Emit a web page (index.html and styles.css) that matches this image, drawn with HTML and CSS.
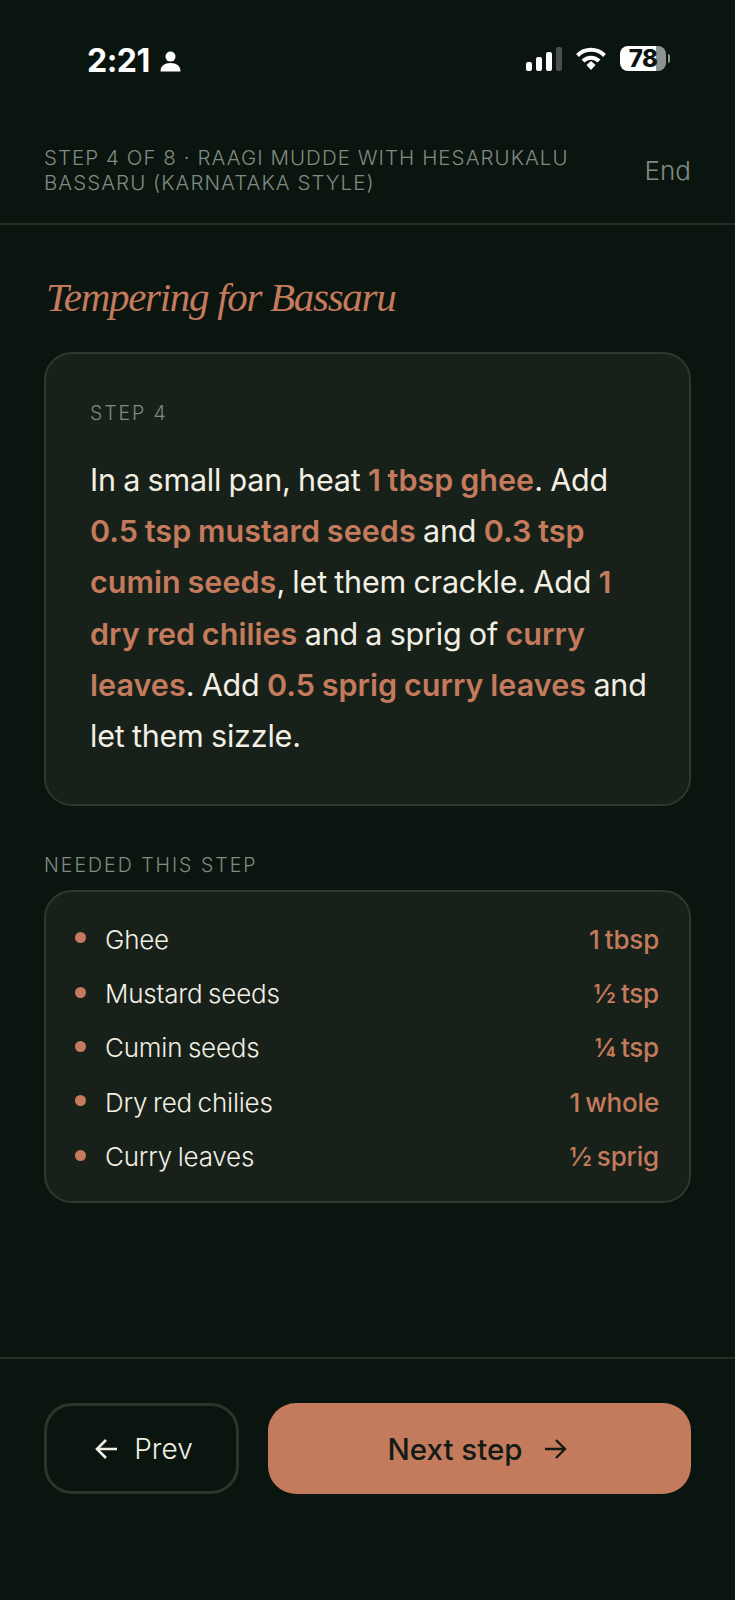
FILE: index.html
```html
<!DOCTYPE html>
<html lang="en">
<head>
<meta charset="utf-8">
<title>Tempering for Bassaru</title>
<link rel="stylesheet" href="styles.css">
</head>
<body>
<div class="page">
  <div class="status">
    <div class="status-left">
      <span class="time">2:21</span>
      <svg class="person" width="21" height="21" viewBox="0 0 21 21"><circle cx="10.500" cy="5.600" r="5" fill="#fff"/><path d="M0.500 20.500c0-5.800 4-8.600 10-8.600s10 2.800 10 8.600z" fill="#fff"/></svg>
    </div>
    <div class="status-right">
      <svg width="36" height="24" viewBox="0 0 36 24"><rect x="0" y="15" width="6" height="9" rx="2" fill="#fff"/><rect x="10" y="10" width="6" height="14" rx="2" fill="#fff"/><rect x="20" y="5" width="6" height="19" rx="2" fill="#fff"/><rect x="30" y="0" width="6" height="24" rx="2" fill="#4a4f4c"/></svg>
      <svg width="32" height="24" viewBox="0 0 32 24"><path d="M2.500 8.500a19 19 0 0 1 27 0" fill="none" stroke="#fff" stroke-width="4"/><path d="M8 14a11.500 11.500 0 0 1 16 0" fill="none" stroke="#fff" stroke-width="4"/><path d="M11.500 18l4.500-4 4.500 4-4.500 5z" fill="#fff"/></svg>
      <div class="battery"><span class="battery-num">78</span><span class="battery-tip"></span></div>
    </div>
  </div>
  <header class="top">
    <div class="crumb">STEP 4 OF 8 · RAAGI MUDDE WITH HESARUKALU BASSARU (KARNATAKA STYLE)</div>
    <div class="end">End</div>
  </header>
  <main class="main">
    <h1 class="title">Tempering for Bassaru</h1>
    <section class="card step">
      <div class="step-label">STEP 4</div>
      <p class="step-text">In a small pan, heat <b>1 tbsp ghee</b>. Add <b>0.5 tsp mustard seeds</b> and <b>0.3 tsp cumin seeds</b>, let them crackle. Add <b>1 dry red chilies</b> and a sprig of <b>curry leaves</b>. Add <b>0.5 sprig curry leaves</b> and let them sizzle.</p>
    </section>
    <div class="needed">NEEDED THIS STEP</div>
    <ul class="card list">
      <li class="row"><span class="dot"></span><span class="name">Ghee</span><span class="qty">1 tbsp</span></li>
      <li class="row"><span class="dot"></span><span class="name">Mustard seeds</span><span class="qty">½ tsp</span></li>
      <li class="row"><span class="dot"></span><span class="name">Cumin seeds</span><span class="qty">¼ tsp</span></li>
      <li class="row"><span class="dot"></span><span class="name">Dry red chilies</span><span class="qty">1 whole</span></li>
      <li class="row"><span class="dot"></span><span class="name">Curry leaves</span><span class="qty">½ sprig</span></li>
    </ul>
  </main>
  <footer class="foot">
    <div class="btn prev">
      <svg width="26" height="26" viewBox="0 0 26 26"><path d="M23 13H3M12 4l-9 9 9 9" fill="none" stroke="#f2efe4" stroke-width="2.600"/></svg>
      <span>Prev</span>
    </div>
    <div class="btn next">
      <span>Next step</span>
      <svg width="26" height="26" viewBox="0 0 26 26"><path d="M3 13h20M14 4l9 9-9 9" fill="none" stroke="#141a14" stroke-width="2.400"/></svg>
    </div>
  </footer>
</div>
</body>
</html>
```
FILE: styles.css
```css
* { box-sizing: border-box; }
html, body { margin: 0; padding: 0; }
body { background: #0b1510; font-family: Inter, "Liberation Sans", sans-serif; color: #f2efe4; }
.page { width: 735px; height: 1600px; display: flex; flex-direction: column; background: #0b1510; overflow: hidden; }
.status { height: 120px; flex: none; display: flex; justify-content: space-between; align-items: flex-start; padding: 43px 69px 0 87px; }
.status-left { display: flex; align-items: center; gap: 10px; }
.time { font-weight: 700; font-size: 32px; line-height: 36px; color: #fff; letter-spacing: -0.5px; }
.person { margin-top: 0; }
.status-right { display: flex; align-items: center; gap: 13px; margin-top: 3px; }
.battery { position: relative; width: 46px; height: 25px; border-radius: 8px; background: linear-gradient(90deg, #fff 0 78%, #8f9390 78%); display: flex; align-items: center; justify-content: center; }
.battery-num { font-weight: 800; font-size: 24px; line-height: 25px; color: #0b1510; letter-spacing: -0.6px; }
.battery-tip { position: absolute; right: -4px; top: 8px; width: 2px; height: 9px; border-radius: 0 2px 2px 0; background: #8f9390; }
.top { flex: none; height: 105px; border-bottom: 2px solid #223026; display: flex; align-items: flex-start; justify-content: space-between; padding: 25px 44px 0; }
.crumb { width: 545px; font-size: 20.5px; line-height: 25px; letter-spacing: 1.05px; color: #808b82; font-weight: 300; }
.end { font-size: 26px; line-height: 30px; margin-top: 11px; color: #808b82; font-weight: 300; }
.main { flex: 1; padding: 0 44px; display: flex; flex-direction: column; }
.title { margin: 49px 0 0 2px; font-family: "Liberation Serif", serif; font-style: italic; font-weight: 400; font-size: 41px; line-height: 46px; letter-spacing: -1.3px; color: #c47a5c; }
.card { background: #182119; border: 2px solid #2a3a2c; border-radius: 28px; }
.step { margin-top: 32px; height: 454px; padding: 0 30px 0 44px; }
.step-label { margin-top: 47px; font-size: 19.5px; line-height: 24px; letter-spacing: 1.9px; color: #808b82; font-weight: 300; }
.step-text { margin: 29px 0 0; font-size: 30.5px; line-height: 51.2px; letter-spacing: -0.2px; word-spacing: -1px; font-weight: 400; color: #f2efe4; }
.step-text b { font-weight: 600; color: #c47a5c; letter-spacing: 0.05px; }
.needed { margin-top: 47px; font-size: 19.5px; line-height: 24px; letter-spacing: 2px; color: #808b82; font-weight: 300; }
.list { list-style: none; margin: 13px 0 0; padding: 20px 30px 19px 29px; height: 313px; flex: none; }
.row { display: flex; align-items: center; height: 54.4px; }
.dot { flex: none; width: 11px; height: 11px; border-radius: 50%; background: #c47a5c; margin: 0 19px 3px 0; }
.name { flex: 1; font-size: 26px; color: #f2efe4; font-weight: 300; letter-spacing: -0.2px; word-spacing: -1.5px; }
.qty { font-size: 26px; font-weight: 500; color: #c47a5c; letter-spacing: -0.2px; word-spacing: -1.5px; }
.foot { flex: none; height: 243px; border-top: 2px solid #223026; padding: 44px 44px 0; display: flex; gap: 29px; align-items: flex-start; }
.btn { height: 91px; border-radius: 28px; display: flex; align-items: center; justify-content: center; font-size: 28px; }
.prev { width: 195px; flex: none; border: 3px solid #283729; gap: 14px; padding-left: 4px; font-weight: 300; color: #f2efe4; }
.next { flex: 1; background: #c47a5c; color: #141a14; gap: 19px; padding-right: 4px; font-weight: 500; font-size: 29.5px; }
```
